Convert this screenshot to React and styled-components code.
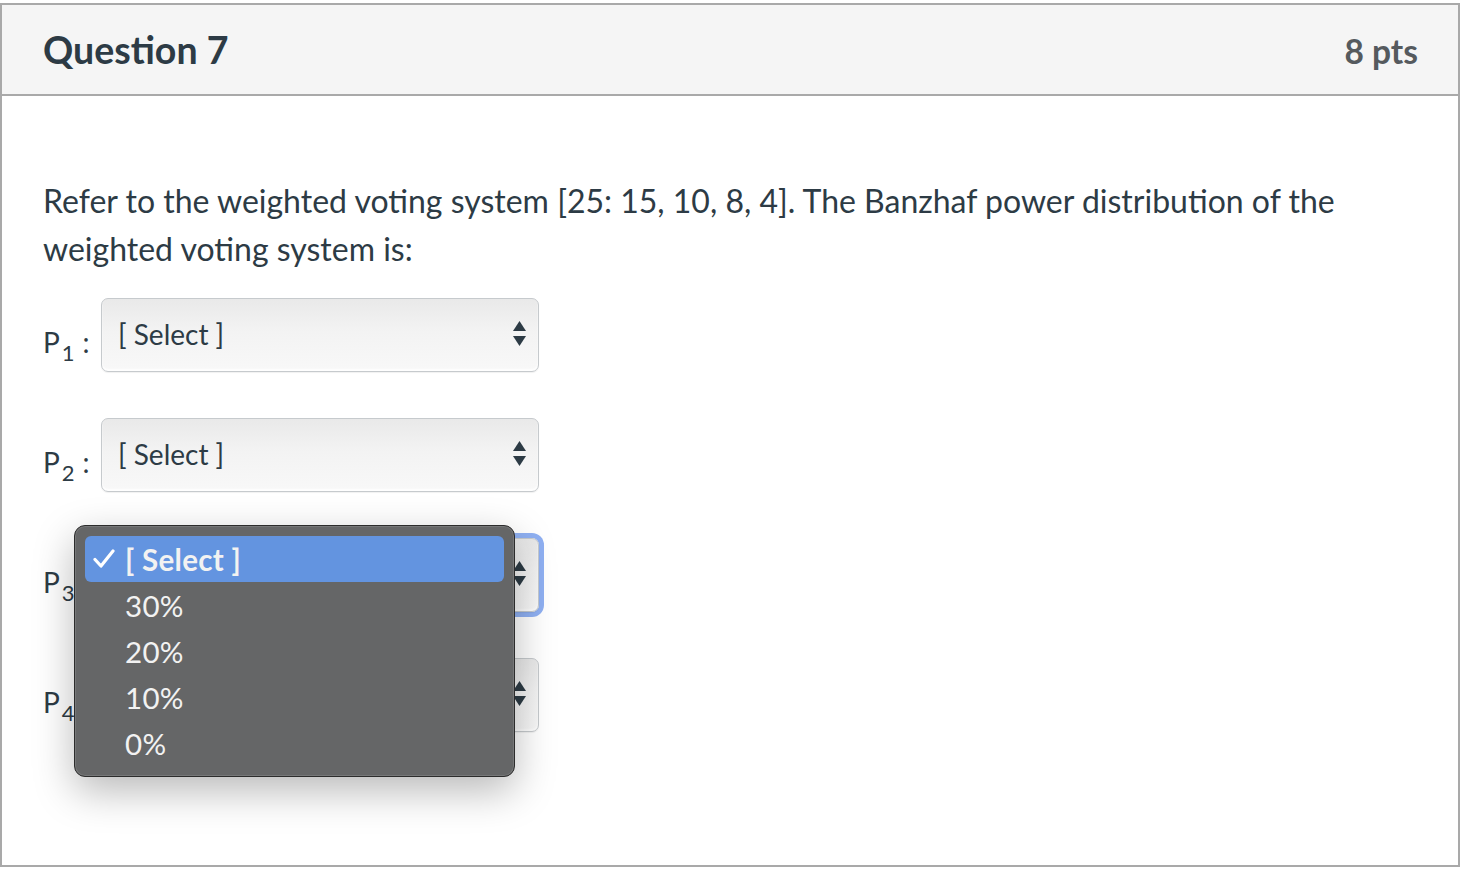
import React from 'react'
import styled, { createGlobalStyle } from 'styled-components'

const Global = createGlobalStyle`
    body {
        margin: 0;
        background: #ffffff;
        font-family: Lato, "Open Sans", sans-serif;
        color: #2d3b45;
    }
`

const Styled = {
    Card: styled.div`
        box-sizing: border-box;
        width: 1460px;
        height: 864px;
        margin-top: 3px;
        border: 2px solid #a9a9a9;
        display: flex;
        flex-direction: column;
    `,
    Header: styled.div`
        box-sizing: border-box;
        height: 91px;
        padding: 0 40px 0 41px;
        background: #f5f5f5;
        border-bottom: 2px solid #a9a9a9;
        display: flex;
        align-items: center;
        justify-content: space-between;
    `,
    Title: styled.h2`
        margin: 0;
        font-size: 37.5px;
        font-weight: 700;
        color: #2d3b45;
    `,
    Points: styled.div`
        font-size: 33.5px;
        font-weight: 700;
        color: #555a5e;
        padding-top: 2px;
    `,
    Body: styled.div`
        padding: 81px 41px 0 41px;
    `,
    Question: styled.p`
        margin: 0 0 25px 0;
        font-size: 32px;
        line-height: 48px;
        color: #2d3b45;
        max-width: 1340px;
    `,
    Row: styled.div`
        position: relative;
        display: flex;
        align-items: flex-start;
        height: 74px;
        margin-bottom: 46px;
    `,
    Label: styled.div`
        width: 58px;
        padding-top: 27px;
        font-size: 28px;
        line-height: 34px;
        color: #2d3b45;
        white-space: nowrap;
        sub {
            font-size: 22px;
            vertical-align: -8px;
            line-height: 0;
            margin: 0 8px 0 2px;
        }
    `,
    Select: styled.div`
        box-sizing: border-box;
        width: 438px;
        height: 74px;
        padding: 0 12px 2px 16px;
        border: 1px solid #c6cacd;
        border-radius: 7px;
        background: linear-gradient(to bottom, #e9e9e9 0%, #f3f3f3 45%, #f8f8f8 100%);
        box-shadow: inset 0 -2px 2px rgba(255, 255, 255, 0.9), 0 1px 1px rgba(0, 0, 0, 0.06)
            ${p => (p.$focused ? ', 0 0 0 5px #8fb0f2' : '')};
        display: flex;
        align-items: center;
        justify-content: space-between;
        font-size: 28px;
        color: #2d3b45;
    `,
    Menu: styled.div`
        position: absolute;
        z-index: 5;
        top: -13px;
        left: 31px;
        box-sizing: border-box;
        width: 441px;
        height: 252px;
        padding: 10px 10px;
        background: #656667;
        border: 1px solid #2c2c2c;
        border-radius: 11px;
        box-shadow: inset 0 0 0 1px rgba(255, 255, 255, 0.12), 0 14px 40px rgba(0, 0, 0, 0.28);
    `,
    Option: styled.div`
        height: 46px;
        display: flex;
        align-items: center;
        padding-left: 40px;
        border-radius: 6px;
        font-size: 29.5px;
        font-weight: ${p => (p.$active ? 700 : 400)};
        color: #f2f2f2;
        background: ${p => (p.$active ? '#6394e0' : 'transparent')};
        position: relative;
        letter-spacing: 0.3px;
    `,
    Check: styled.svg`
        position: absolute;
        left: 8px;
        top: 13px;
    `,
}

const Arrows = () => (
    <svg width="13" height="26" viewBox="0 0 13 26">
        <path d="M6.5 0 L13 10 H0 Z" fill="#2d3b45" />
        <path d="M0 15 H13 L6.5 25 Z" fill="#2d3b45" />
    </svg>
)

const options = ['[ Select ]', '30%', '20%', '10%', '0%']

const App = () => {
    const players = [1, 2, 3, 4]

    return (
        <>
            <Global />
            <Styled.Card>
                <Styled.Header>
                    <Styled.Title>Question 7</Styled.Title>
                    <Styled.Points>8 pts</Styled.Points>
                </Styled.Header>
                <Styled.Body>
                    <Styled.Question>
                        Refer to the weighted voting system [25: 15, 10, 8, 4]. The Banzhaf power distribution of the weighted voting system is:
                    </Styled.Question>
                    {players.map(n => (
                        <Styled.Row key={n}>
                            <Styled.Label>
                                P<sub>{n}</sub>:
                            </Styled.Label>
                            <Styled.Select $focused={n === 3}>
                                <span>[ Select ]</span>
                                <Arrows />
                            </Styled.Select>
                            {n === 3 && (
                                <Styled.Menu>
                                    {options.map((o, i) => (
                                        <Styled.Option key={o} $active={i === 0}>
                                            {i === 0 && (
                                                <Styled.Check width="22" height="20" viewBox="0 0 22 20">
                                                    <path d="M2 10.5 L8 17 L20 2" fill="none" stroke="#ffffff" strokeWidth="3.2" strokeLinecap="round" strokeLinejoin="round" />
                                                </Styled.Check>
                                            )}
                                            {o}
                                        </Styled.Option>
                                    ))}
                                </Styled.Menu>
                            )}
                        </Styled.Row>
                    ))}
                </Styled.Body>
            </Styled.Card>
        </>
    )
}

export default App
